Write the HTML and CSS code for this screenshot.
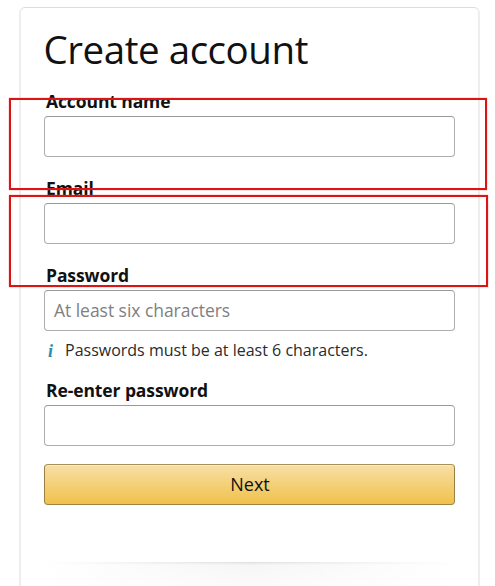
FILE: index.html
```
<!DOCTYPE html>
<html lang="en">
<head>
    <meta charset="UTF-8">
    <meta name="viewport" content="width=device-width, initial-scale=1.0">
    <title>Create account</title>
    <link rel="stylesheet" href="styles.css">
</head>
<body>
    <div class="container">
        <h1>Create account</h1>
        <form>
            <div class="field">
                <label for="name">Account name</label>
                <input type="text" id="name">
            </div>
            <div class="field">
                <label for="email">Email</label>
                <input type="email" id="email">
            </div>
            <div class="field password-field">
                <label for="password">Password</label>
                <input type="password" id="password" placeholder="At least six characters">
            </div>
            <p class="hint"><i>i</i><span>Passwords must be at least 6 characters.</span></p>
            <div class="field">
                <label for="repeat">Re-enter password</label>
                <input type="password" id="repeat">
            </div>
            <button type="button">Next</button>
        </form>
        <div class="divider"></div>
    </div>
    <div class="marker marker-name"></div>
    <div class="marker marker-email"></div>
</body>
</html>
```

FILE: styles.css
```
* {
    margin: 0;
    padding: 0;
    box-sizing: border-box;
}

body {
    position: relative;
    height: 586px;
    overflow: hidden;
    background: #fff;
    font-family: "Open Sans", "Noto Sans", sans-serif;
    color: #111;
}

/* Card around the form, runs off the bottom of the page */
.container {
    width: 461px;
    height: 600px;
    margin: 7px 0 0 19px;
    padding: 14px 23px 0;
    border: 2px solid #eee;
    border-top: 1px solid #ddd;
    border-radius: 6px;
}

h1 {
    height: 70px;
    font-size: 38.5px;
    font-weight: 400;
    line-height: 54px;
    letter-spacing: -0.45px;
    text-indent: -0.5px;
    white-space: nowrap;
}

/* Label and input pairs */
.field {
    margin-bottom: 22px;
}

.password-field {
    margin-bottom: 7px;
}

label {
    display: block;
    height: 24px;
    padding-left: 2px;
    font-size: 17.5px;
    font-weight: 700;
    line-height: 18px;
    letter-spacing: -0.1px;
    white-space: nowrap;
}

input {
    display: block;
    width: 411px;
    height: 41px;
    padding: 0 9px 1px;
    border: 1px solid #adadad;
    border-top-color: #999;
    border-radius: 4px;
    background: #fff;
    font: 17.5px "Open Sans", "Noto Sans", sans-serif;
    letter-spacing: -0.04px;
}

input::placeholder {
    color: #808080;
}

/* Hint under the password */
.hint {
    display: flex;
    height: 43px;
    padding-left: 4px;
    font-size: 16px;
    line-height: 24px;
    color: #2b2b2b;
    white-space: nowrap;
}

.hint i {
    width: 17px;
    font: italic bold 18px/27px "Liberation Serif", serif;
    color: #2b8cae;
}

button {
    display: block;
    width: 411px;
    height: 41px;
    margin-top: -4px;
    padding: 0 0 1px 1px;
    border: 1px solid #a58a4b;
    border-color: #a88f5a #9c8043 #a08344;
    border-radius: 4px;
    background: linear-gradient(#f7dfa5, #f0c14b);
    box-shadow: inset 0 1px 0 rgba(255, 255, 255, 0.4);
    font: 18px "Open Sans", "Noto Sans", sans-serif;
    color: #111;
}

/* Fading line at the bottom */
.divider {
    height: 26px;
    margin-top: 57px;
    background:
        linear-gradient(to right, #fff, transparent 50%, #fff),
        linear-gradient(#dedede, #f6f6f6 3px, #fbfbfb);
}

/* Red frames over the first two fields */
.marker {
    position: absolute;
    left: 9px;
    border: 2px solid #dc1414;
    box-shadow: 0 0 1px #f55;
}

.marker-name {
    top: 98px;
    width: 478px;
    height: 92px;
}

.marker-email {
    top: 195px;
    width: 479px;
    height: 92px;
}
```
